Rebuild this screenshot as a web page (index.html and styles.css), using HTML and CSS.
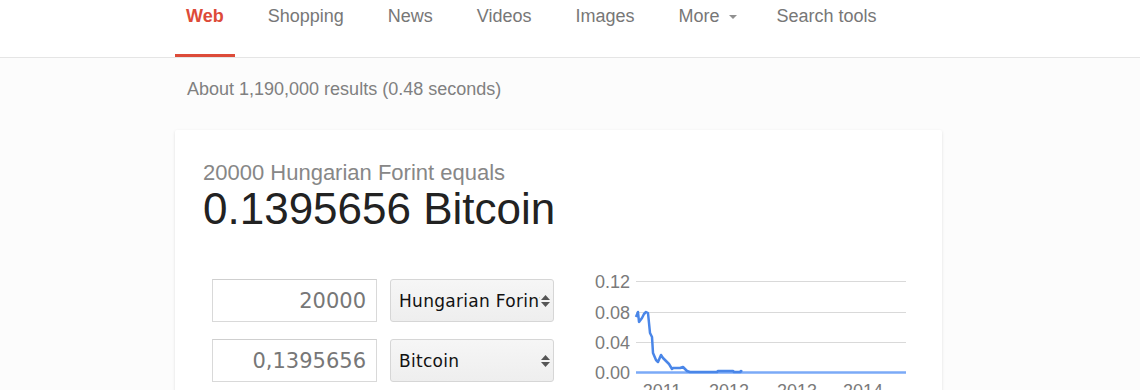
FILE: index.html
```html
<!DOCTYPE html>
<html lang="en">
<head>
    <meta charset="UTF-8">
    <title>20000 HUF to BTC</title>
    <link rel="stylesheet" href="styles.css">
</head>
<body>
    <div class="topnav">
        <a class="tab active">Web</a>
        <a class="tab">Shopping</a>
        <a class="tab">News</a>
        <a class="tab">Videos</a>
        <a class="tab">Images</a>
        <a class="tab more">More <span class="caret"></span></a>
        <a class="tab">Search tools</a>
    </div>

    <div class="main">
        <div class="stats">About 1,190,000 results (0.48 seconds)</div>

        <div class="card">
            <div class="lead">20000 Hungarian Forint equals</div>
            <div class="answer">0.1395656 Bitcoin</div>

            <div class="converter">
                <div class="fields">
                    <div class="field-row">
                        <input class="amount" type="text" value="20000">
                        <div class="unit">
                            <span class="unit-name">Hungarian Forint</span>
                            <svg class="updown" width="11" height="14" viewBox="0 0 11 14">
                                <path d="M1 6 L5.5 1 L10 6 Z" fill="#555"/>
                                <path d="M1 8 L5.5 13 L10 8 Z" fill="#555"/>
                            </svg>
                        </div>
                    </div>
                    <div class="field-row">
                        <input class="amount" type="text" value="0,1395656">
                        <div class="unit">
                            <span class="unit-name">Bitcoin</span>
                            <svg class="updown" width="11" height="14" viewBox="0 0 11 14">
                                <path d="M1 6 L5.5 1 L10 6 Z" fill="#555"/>
                                <path d="M1 8 L5.5 13 L10 8 Z" fill="#555"/>
                            </svg>
                        </div>
                    </div>
                </div>

                <!-- rate history -->
                <svg class="chart" width="340" height="130" viewBox="0 0 340 130">
                    <g stroke="#d9d9d9" stroke-width="1">
                        <line x1="51" y1="11.5" x2="321" y2="11.5"/>
                        <line x1="51" y1="42.5" x2="321" y2="42.5"/>
                        <line x1="51" y1="72.5" x2="321" y2="72.5"/>
                    </g>
                    <g class="axis" text-anchor="end">
                        <text x="45" y="18">0.12</text>
                        <text x="45" y="49">0.08</text>
                        <text x="45" y="79">0.04</text>
                        <text x="45" y="109">0.00</text>
                    </g>
                    <line x1="51" y1="102.5" x2="321" y2="102.5" stroke="#7baaf7" stroke-width="2.5"/>
                    <polyline fill="none" stroke="#4a86e8" stroke-width="2.5" stroke-linejoin="round"
                        points="51,47 53,42 54,52 57,48 59,44 61,42 63,43 65,63 67,67 68,83 71,90 73,92 76,85 78,88 82,92 84,94 87,99 88,98 95,98 98,97 102,101 105,102 132,102 133,101 148,101 149,102 155,102 156,101 157,102"/>
                    <g class="axis" text-anchor="middle">
                        <text x="77" y="127">2011</text>
                        <text x="144" y="127">2012</text>
                        <text x="212" y="127">2013</text>
                        <text x="278" y="127">2014</text>
                    </g>
                </svg>
            </div>
        </div>
    </div>
</body>
</html>
```

FILE: styles.css
```css
* {
    margin: 0;
    padding: 0;
    box-sizing: border-box;
}

body {
    font-family: 'Liberation Sans', Arial, sans-serif;
    background: #fcfcfc;
    height: 390px;
    overflow: hidden;
}

.topnav {
    display: flex;
    gap: 22px;
    height: 58px;
    padding-left: 175px;
    background: #fff;
    border-bottom: 1px solid #e5e5e5;
}

.tab {
    display: block;
    height: 57px;
    padding: 6px 11px 0;
    font-size: 18px;
    line-height: 20px;
    color: #777;
    border-bottom: 3px solid transparent;
}

.tab.active {
    color: #dd4b39;
    font-weight: bold;
    border-bottom-color: #dd4b39;
}

.tab.more {
    padding-right: 7px;
}

.caret {
    display: inline-block;
    width: 0;
    height: 0;
    margin-left: 4px;
    vertical-align: middle;
    border-left: 4.5px solid transparent;
    border-right: 4.5px solid transparent;
    border-top: 4.5px solid #909090;
}

.main {
    padding-left: 175px;
}

.stats {
    padding: 21px 0 0 12px;
    font-size: 18px;
    line-height: 20px;
    color: #808080;
}

.card {
    width: 767px;
    height: 300px;
    margin-top: 31px;
    padding: 31px 0 0 28px;
    background: #fff;
    border-radius: 2px;
    box-shadow: 0 1px 3px rgba(0, 0, 0, 0.12);
}

.lead {
    font-size: 22px;
    line-height: 24px;
    color: #878787;
}

.answer {
    font-size: 44px;
    line-height: 48px;
    color: #222;
}

.converter {
    display: flex;
    align-items: flex-start;
    gap: 31px;
    margin-top: 46px;
    padding-left: 9px;
}

.fields {
    display: flex;
    flex-direction: column;
    gap: 17px;
}

.field-row {
    display: flex;
    gap: 13px;
}

.amount {
    width: 165px;
    height: 43px;
    padding: 0 10px;
    font-family: 'DejaVu Sans', sans-serif;
    font-size: 21px;
    color: #777;
    text-align: right;
    background: #fff;
    border: 1px solid #d9d9d9;
    border-top-color: #cfcfcf;
    outline: none;
}

.unit {
    display: flex;
    align-items: center;
    width: 164px;
    height: 43px;
    padding: 0 2px 0 8px;
    font-family: 'DejaVu Sans', sans-serif;
    font-size: 17px;
    letter-spacing: 0.3px;
    color: #111;
    background: linear-gradient(#f6f6f6, #eeeeee);
    border: 1px solid #d6d6d6;
    border-radius: 3px;
}

.unit-name {
    width: 142px;
    overflow: hidden;
    white-space: nowrap;
}

.updown {
    flex-shrink: 0;
}

.chart {
    margin-top: -9px;
    display: block;
}

.axis {
    font-family: 'Liberation Sans', Arial, sans-serif;
    font-size: 18px;
    fill: #7a7a7a;
}
```
